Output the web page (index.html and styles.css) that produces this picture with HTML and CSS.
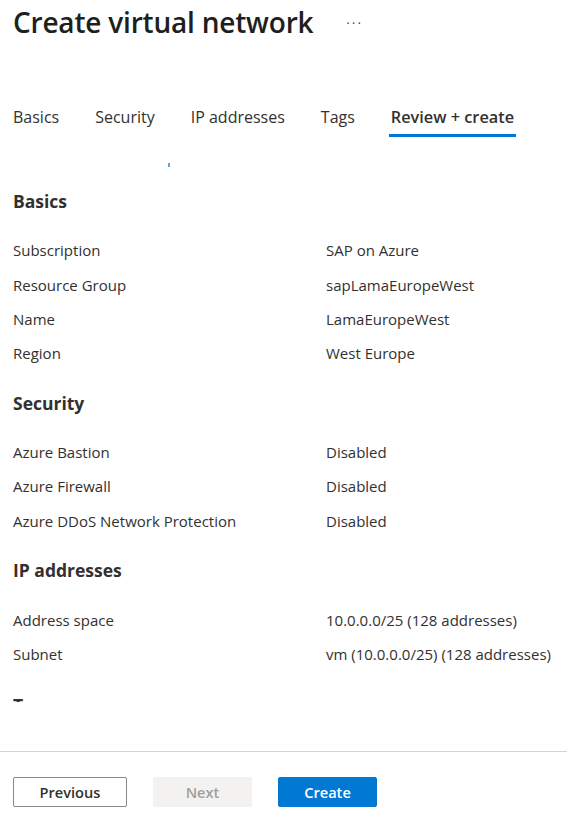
FILE: index.html
```html
<!DOCTYPE html>
<html lang="en">
<head>
<meta charset="utf-8">
<title>Create virtual network</title>
<link rel="stylesheet" href="styles.css">
</head>
<body>
<div class="page">
  <header class="title-bar">
    <h1 class="title">Create virtual network</h1>
    <span class="more">&middot;&middot;&middot;</span>
  </header>
  <nav class="tabs">
    <span class="tab">Basics</span>
    <span class="tab">Security</span>
    <span class="tab">IP addresses</span>
    <span class="tab">Tags</span>
    <span class="tab active">Review + create</span>
  </nav>
  <div class="mark-row"><span class="mark"></span></div>
  <main class="content">
    <section class="section">
      <h2 class="section-title">Basics</h2>
      <div class="row"><span class="label">Subscription</span><span class="value">SAP on Azure</span></div>
      <div class="row"><span class="label">Resource Group</span><span class="value">sapLamaEuropeWest</span></div>
      <div class="row"><span class="label">Name</span><span class="value">LamaEuropeWest</span></div>
      <div class="row"><span class="label">Region</span><span class="value">West Europe</span></div>
    </section>
    <section class="section">
      <h2 class="section-title">Security</h2>
      <div class="row"><span class="label">Azure Bastion</span><span class="value">Disabled</span></div>
      <div class="row"><span class="label">Azure Firewall</span><span class="value">Disabled</span></div>
      <div class="row"><span class="label">Azure DDoS Network Protection</span><span class="value">Disabled</span></div>
    </section>
    <section class="section">
      <h2 class="section-title">IP addresses</h2>
      <div class="row"><span class="label">Address space</span><span class="value">10.0.0.0/25 (128 addresses)</span></div>
      <div class="row"><span class="label">Subnet</span><span class="value">vm (10.0.0.0/25) (128 addresses)</span></div>
    </section>
    <section class="section section-last">
      <h2 class="section-title">Tags</h2>
    </section>
  </main>
  <footer class="footer">
    <button class="btn btn-secondary">Previous</button>
    <button class="btn btn-disabled" disabled>Next</button>
    <button class="btn btn-primary">Create</button>
  </footer>
</div>
</body>
</html>
```
FILE: styles.css
```css
* { box-sizing: border-box; }
html, body {
  margin: 0;
  padding: 0;
  background: #ffffff;
}
body {
  font-family: "Open Sans", "Noto Sans", sans-serif;
  color: #323130;
  width: 567px;
  height: 820px;
  overflow: hidden;
}
.page {
  display: flex;
  flex-direction: column;
  height: 820px;
}
.title-bar {
  display: flex;
  align-items: center;
  height: 44px;
  padding-left: 13px;
}
.title {
  margin: 0;
  font-size: 28px;
  font-weight: 600;
  line-height: 44px;
  color: #201f1e;
  letter-spacing: -0.2px;
}
.more {
  margin-left: 33px;
  font-size: 12px;
  color: #323130;
  letter-spacing: 2.5px;
  line-height: 44px;
  padding-top: 4px;
}
.tabs {
  display: flex;
  gap: 32px;
  margin-top: 53px;
  padding-left: 11px;
}
.tab {
  padding: 10px 2px 7px;
  line-height: 20px;
  font-size: 16px;
  color: #323130;
  border-bottom: 3px solid transparent;
  white-space: nowrap;
}
.tab.active {
  font-size: 16.3px;
  font-weight: 600;
  border-bottom-color: #0078d4;
}
.mark-row {
  height: 30px;
  padding-top: 26px;
  padding-left: 168px;
}
.mark {
  display: block;
  width: 2px;
  height: 4px;
  background: #5fa5e6;
}
.content {
  height: 535px;
  overflow: hidden;
  padding: 19px 13px 0;
}
.section {
  margin-bottom: 17.3px;
}
.section-last {
  padding-top: 2px;
}
.section-title {
  margin: 0 0 17px;
  height: 30px;
  line-height: 30px;
  font-size: 17.5px;
  font-weight: 700;
  color: #323130;
}
.row {
  display: grid;
  grid-template-columns: 313px 1fr;
  height: 34.4px;
  align-items: center;
  font-size: 15px;
  white-space: nowrap;
}
.footer {
  margin-top: 49px;
  border-top: 1px solid #d6d4d2;
  padding: 25px 13px 0;
  display: flex;
  gap: 26px;
  flex: 1;
}
.btn {
  height: 30px;
  padding: 0;
  font-family: inherit;
  font-size: 14.6px;
  font-weight: 600;
  border-radius: 2px;
  line-height: 28px;
}
.btn-secondary {
  width: 114px;
  background: #ffffff;
  border: 1px solid #8a8886;
  color: #323130;
}
.btn-disabled {
  width: 99px;
  background: #f3f2f1;
  border: 1px solid #f3f2f1;
  color: #a19f9d;
}
.btn-primary {
  width: 99px;
  background: #0078d4;
  border: 1px solid #0078d4;
  color: #ffffff;
}
```
